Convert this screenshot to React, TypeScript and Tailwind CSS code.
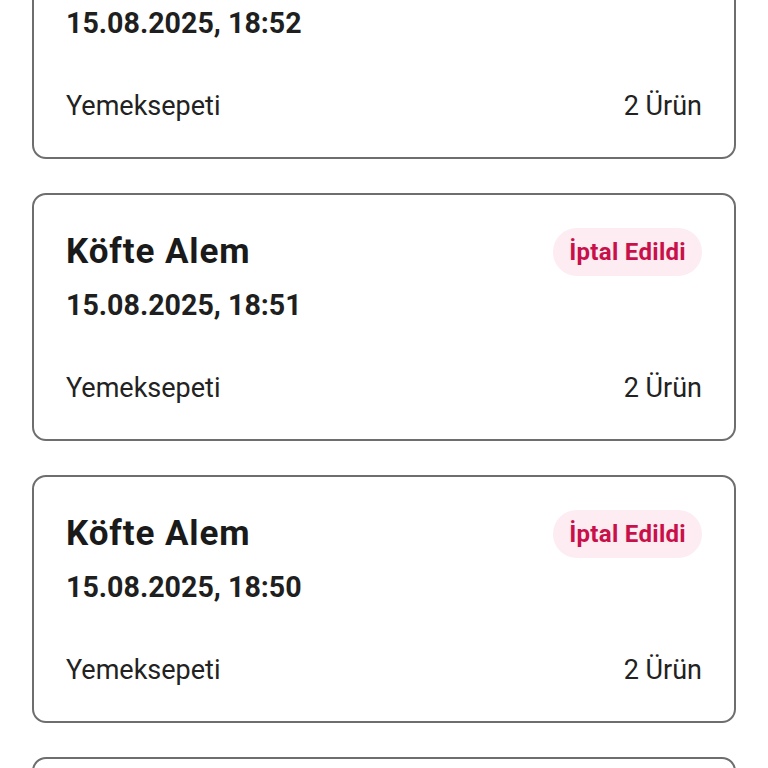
import * as React from "react";

interface Order {
  restaurant: string;
  date: string;
  platform: string;
  items: number;
  cancelled: boolean;
}

const orders: Order[] = [
  { restaurant: "Köfte Alem", date: "15.08.2025, 18:52", platform: "Yemeksepeti", items: 2, cancelled: true },
  { restaurant: "Köfte Alem", date: "15.08.2025, 18:51", platform: "Yemeksepeti", items: 2, cancelled: true },
  { restaurant: "Köfte Alem", date: "15.08.2025, 18:50", platform: "Yemeksepeti", items: 2, cancelled: true },
  { restaurant: "Köfte Alem", date: "15.08.2025, 18:49", platform: "Yemeksepeti", items: 2, cancelled: true },
];

function OrderCard({ order }: { order: Order }) {
  return (
    <div className="rounded-[14px] border-2 border-[#6e6e6e] bg-white px-[32px] pt-[33px] pb-[35px]">
      <div className="flex h-[48px] items-center justify-between">
        <span className="text-[35px] leading-[40px] font-bold tracking-[0.9px] text-[#1a1a1a]">
          {order.restaurant}
        </span>
        {order.cancelled && (
          <span className="flex h-[48px] items-center rounded-full bg-[#fdecf1] px-[16px] text-[24px] font-bold tracking-[0.3px] text-[#c8104a]">
            İptal Edildi
          </span>
        )}
      </div>
      <div className="mt-[12px] text-[28.6px] leading-[34px] font-bold text-[#1f1f1f]">{order.date}</div>
      <div className="mt-[50px] flex items-center justify-between text-[27px] leading-[32px] text-[#222222]">
        <span>{order.platform}</span>
        <span>{order.items} Ürün</span>
      </div>
    </div>
  );
}

export default function App() {
  return (
    <div className="h-[768px] overflow-hidden bg-white font-['Roboto',sans-serif]">
      <div className="-mt-[89px] flex flex-col gap-[34px] px-[32px]">
        {orders.map((o, i) => (
          <OrderCard key={i} order={o} />
        ))}
      </div>
    </div>
  );
}
